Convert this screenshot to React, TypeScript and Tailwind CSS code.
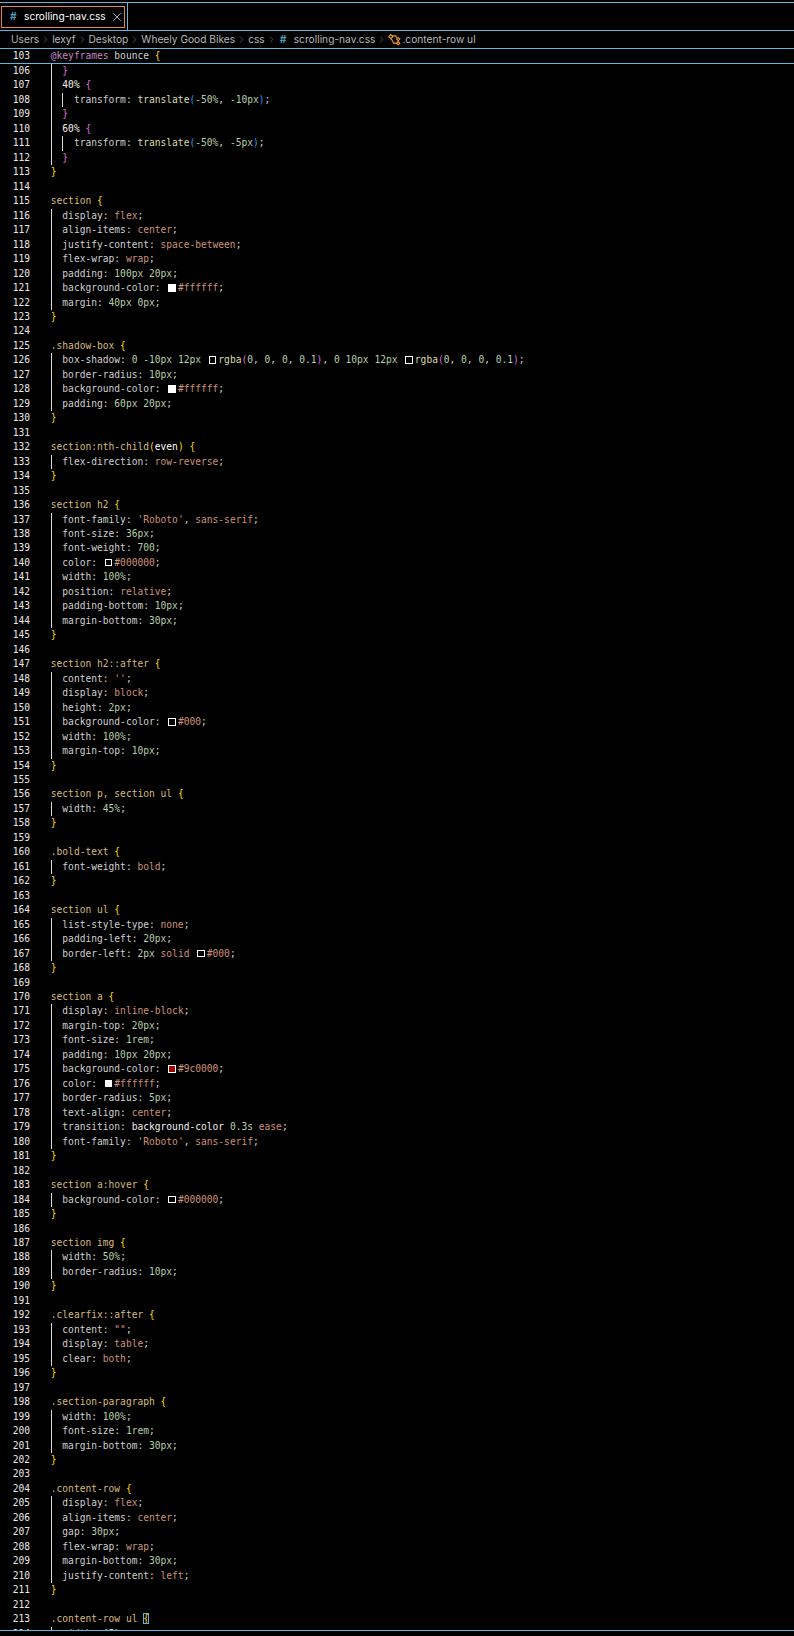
import { ChevronRight, X } from 'lucide-react'

const source = `  }
  40% {
    transform: translate(-50%, -10px);
  }
  60% {
    transform: translate(-50%, -5px);
  }
}

section {
  display: flex;
  align-items: center;
  justify-content: space-between;
  flex-wrap: wrap;
  padding: 100px 20px;
  background-color: #ffffff;
  margin: 40px 0px;
}

.shadow-box {
  box-shadow: 0 -10px 12px #000000rgba(0, 0, 0, 0.1), 0 10px 12px #000000rgba(0, 0, 0, 0.1);
  border-radius: 10px;
  background-color: #ffffff;
  padding: 60px 20px;
}

section:nth-child(even) {
  flex-direction: row-reverse;
}

section h2 {
  font-family: 'Roboto', sans-serif;
  font-size: 36px;
  font-weight: 700;
  color: #000000;
  width: 100%;
  position: relative;
  padding-bottom: 10px;
  margin-bottom: 30px;
}

section h2::after {
  content: '';
  display: block;
  height: 2px;
  background-color: #000;
  width: 100%;
  margin-top: 10px;
}

section p, section ul {
  width: 45%;
}

.bold-text {
  font-weight: bold;
}

section ul {
  list-style-type: none;
  padding-left: 20px;
  border-left: 2px solid #000;
}

section a {
  display: inline-block;
  margin-top: 20px;
  font-size: 1rem;
  padding: 10px 20px;
  background-color: #9c0000;
  color: #ffffff;
  border-radius: 5px;
  text-align: center;
  transition: background-color 0.3s ease;
  font-family: 'Roboto', sans-serif;
}

section a:hover {
  background-color: #000000;
}

section img {
  width: 50%;
  border-radius: 10px;
}

.clearfix::after {
  content: "";
  display: table;
  clear: both;
}

.section-paragraph {
  width: 100%;
  font-size: 1rem;
  margin-bottom: 30px;
}

.content-row {
  display: flex;
  align-items: center;
  gap: 30px;
  flex-wrap: wrap;
  margin-bottom: 30px;
  justify-content: left;
}

.content-row ul {
  width: 45%;`.split('\n')

const Swatch = ({ color }: { color: string }) => (
	<span className="inline-flex h-[8px] w-[11.56px] items-center justify-center align-[-0.5px]">
		<span
			className={`h-[7.5px] w-[7.5px] border border-white ${
				color === '#ffffff' ? 'bg-white' : color === '#9c0000' ? 'bg-[#9c0000]' : 'bg-black'
			}`}
		/>
	</span>
)

const Value = ({ text }: { text: string }) => {
	const parts = text.match(/#[0-9a-f]{3,6}|'[^']*'|"[^"]*"|-?[\d.]+(?:px|rem|%|s)?|[a-z-]+|./g) ?? []
	let parenColor = 'text-[#da70d6]'
	return (
		<>
			{parts.map((part, i) => {
				if (part.startsWith('#')) {
					// the black swatch in front of rgba() has no hex after it
					const isRgba = parts[i + 1] === 'rgba'
					return (
						<span key={i}>
							<Swatch color={part} />
							{!isRgba && <span className="text-[#ce9178]">{part}</span>}
						</span>
					)
				}
				if (part === 'translate' || part === 'rgba') {
					parenColor = part === 'translate' ? 'text-[#179fff]' : 'text-[#da70d6]'
					return <span key={i} className="text-[#dcdcaa]">{part}</span>
				}
				if (part === '(' || part === ')') return <span key={i} className={parenColor}>{part}</span>
				if (part === 'background-color') return <span key={i} className="text-[#f0f0f0]">{part}</span>
				if (/^-?[\d.]/.test(part)) return <span key={i} className="text-[#b5cea8]">{part}</span>
				if (/^[a-z'"]/.test(part)) return <span key={i} className="text-[#ce9178]">{part}</span>
				return <span key={i}>{part}</span>
			})}
		</>
	)
}

const CodeText = ({ text, lineNo }: { text: string; lineNo: number }) => {
	const decl = text.match(/^([a-z-]+): (.*?);?$/)
	if (decl) {
		return (
			<>
				{decl[1]}: <Value text={decl[2]} />;
			</>
		)
	}
	if (text === '}') {
		return <span className={lineNo < 113 ? 'text-[#da70d6]' : 'text-[#ffd700]'}>{'}'}</span>
	}
	if (text === '40% {' || text === '60% {') {
		return (
			<>
				<span className="text-[#f0f0f0]">{text.slice(0, 3)} </span>
				<span className="text-[#da70d6]">{'{'}</span>
			</>
		)
	}
	if (text === 'section:nth-child(even) {') {
		return (
			<>
				<span className="text-[#d7ba7d]">section:nth-child</span>
				<span className="text-[#ffd700]">(</span>
				<span className="text-white">even</span>
				<span className="text-[#ffd700]">)</span>
				<span className="text-[#ffd700]"> {'{'}</span>
			</>
		)
	}
	if (text.endsWith('{')) {
		const isLast = lineNo === 213
		return (
			<>
				<span className="text-[#d7ba7d]">{text.slice(0, -1)}</span>
				<span className={isLast ? 'text-[#ffd700] outline-1 outline-[#5fb4d8] -outline-offset-1' : 'text-[#ffd700]'}>
					{'{'}
				</span>
			</>
		)
	}
	return <>{text}</>
}

const CodeLine = ({ line, lineNo }: { line: string; lineNo: number }) => {
	const text = line.trim()
	const depth = text ? (line.length - line.trimStart().length) / 2 : 0
	return (
		<div className="flex h-[14.477px] shrink-0 items-stretch leading-[14.477px] whitespace-pre text-[#cfcfcf]">
			<span className="w-[30px] shrink-0 text-right text-[#e8e8e8]">{lineNo}</span>
			<span className="w-[20.8px] shrink-0" />
			{Array.from({ length: depth }).map((_, i) => (
				<span key={i} className="w-[11.56px] shrink-0 border-l border-[#d8d8d8]" />
			))}
			<span>
				<CodeText text={text} lineNo={lineNo} />
			</span>
		</div>
	)
}

const Chevron = () => <ChevronRight className="mx-[1px] h-[11px] w-[11px] text-[#a8a8a8]" strokeWidth={1} />

const App = () => {
	return (
		<div className="flex h-[1636px] w-[794px] flex-col overflow-hidden bg-black pt-[2px] font-['DejaVu_Sans_Mono',monospace] text-[9.6px]">
			{/* tab strip */}
			<div className="flex h-[29px] shrink-0 border-y border-[#62b6dc]">
				<div className="flex w-[127px] items-center pl-[1px] pt-[1px]">
					<div className="flex h-[22px] w-[124px] items-center border border-[#e8872a] pl-[8px] font-['Inter',sans-serif] text-[10.2px] text-white">
						<span className="w-[14px] font-bold text-[#519aba]">#</span>
						<span>scrolling-nav.css</span>
						<X className="ml-[4px] h-[14px] w-[14px] text-[#d0d0d0]" strokeWidth={1.4} />
					</div>
				</div>
				<div className="w-px bg-[#62b6dc]" />
			</div>

			{/* breadcrumbs */}
			<div className="flex h-[18px] shrink-0 items-center border-b border-[#62b6dc] pl-[11px] font-['Inter',sans-serif] text-[10.2px] text-[#b8b8b8]">
				<span>Users</span>
				<Chevron />
				<span>lexyf</span>
				<Chevron />
				<span>Desktop</span>
				<Chevron />
				<span>Wheely Good Bikes</span>
				<Chevron />
				<span>css</span>
				<Chevron />
				<span className="ml-[2px] w-[14px] font-bold text-[#519aba]">#</span>
				<span>scrolling-nav.css</span>
				<Chevron />
				<svg viewBox="0 0 16 16" className="mr-[1px] h-[13px] w-[13px] text-[#ee9d28]" fill="none" stroke="currentColor" strokeWidth="1.4">
					<path d="M1 4.5 3.5 2 6 4.5 3.5 7Z" />
					<path d="M10.5 7.5 12.5 5.5 14.5 7.5 12.5 9.5Z" />
					<path d="M10.5 12.5 12.5 10.5 14.5 12.5 12.5 14.5Z" />
					<path d="M5 3.5h4.5l1 2.5M4 7l3 5.5h3.5" />
				</svg>
				<span>.content-row ul</span>
			</div>

			{/* sticky scroll line */}
			<div className="flex h-[15px] shrink-0 items-center border-b border-[#62b6dc] leading-[14px] whitespace-pre text-[#cfcfcf]">
				<span className="w-[30px] shrink-0 text-right text-[#e8e8e8]">103</span>
				<span className="w-[20.8px] shrink-0" />
				<span className="text-[#c586c0]">@keyframes</span>
				<span> bounce </span>
				<span className="text-[#ffd700]">{'{'}</span>
			</div>

			{/* code */}
			<div className="relative flex h-[1567px] shrink-0 flex-col overflow-hidden">
				{source.map((line, i) => (
					<CodeLine key={i} line={line} lineNo={106 + i} />
				))}
				<div className="absolute inset-x-0 bottom-0 h-px bg-[#62b6dc]" />
			</div>
		</div>
	)
}

export default App
